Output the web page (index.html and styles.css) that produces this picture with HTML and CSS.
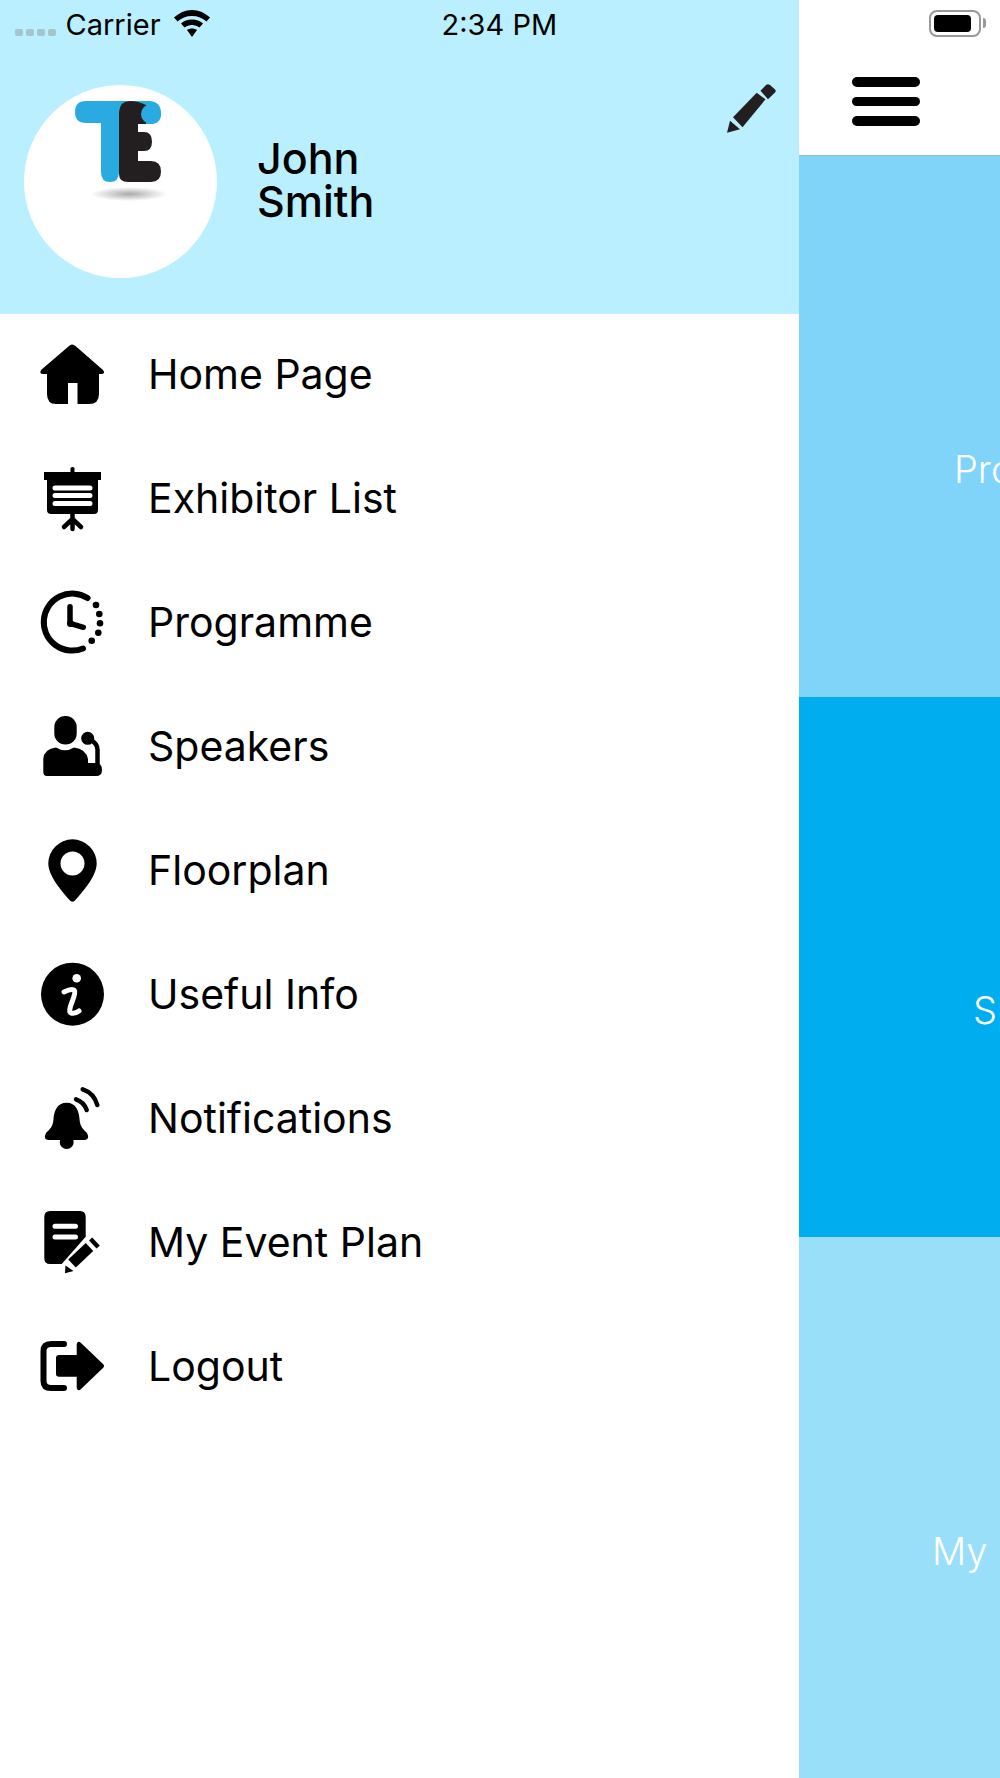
FILE: index.html
```html
<!DOCTYPE html>
<html lang="en">
<head>
    <meta charset="UTF-8">
    <meta name="viewport" content="width=device-width, initial-scale=1.0">
    <title>Event menu</title>
    <link rel="stylesheet" href="styles.css">
</head>
<body>
    <div class="app">
        <aside class="drawer">
            <header class="drawer-head">
                <div class="status">
                    <div class="signal"><span></span><span></span><span></span><span></span></div>
                    <span class="carrier">Carrier</span>
                    <svg class="wifi" viewBox="0 0 36 27"><path d="M18 0C25 0 31 3 36 7.500L32.500 11.500C28.500 8 24 6 18 6C12 6 7.500 8 3.500 11.500L0 7.500C5 3 11 0 18 0Z"/><path d="M18 9.500C22.500 9.500 26 11 29 13.500L25.500 17.500C23.500 16 21 15 18 15C15 15 12.500 16 10.500 17.500L7 13.500C10 11 13.500 9.500 18 9.500Z"/><path d="M18 18.500C20 18.500 21.500 19 23 20L18 27L13 20C14.500 19 16 18.500 18 18.500Z"/></svg>
                    <span class="time">2:34 PM</span>
                </div>
                <div class="profile">
                    <div class="avatar">
                        <svg class="logo" viewBox="0 0 100 110">
                            <defs>
                                <radialGradient id="logo-shadow">
                                    <stop offset="0" stop-color="#aaa"/>
                                    <stop offset="1" stop-color="#fff"/>
                                </radialGradient>
                            </defs>
                            <ellipse cx="55" cy="94" rx="38" ry="7" fill="url(#logo-shadow)"/>
                            <path fill="#29abe2" d="M12 1H76Q87 2 87 13Q87 24 77 24H45V72Q45 82 36 82Q27 82 27 72V23H12Q1 23 1 12Q1 1 12 1Z"/>
                            <path fill="#231f20" d="M45 12Q46 1 56 1Q64 1 72 5V24H64V32H70Q78 32 78 41.500Q78 51 70 51H64V61H77Q87 61 87 71.500Q87 82 77 82H54Q45 82 45 74Z"/>
                            <circle fill="#29abe2" cx="77" cy="14" r="10"/>
                        </svg>
                    </div>
                    <div class="name">John<br>Smith</div>
                    <svg class="edit" viewBox="0 0 50 50"><path d="M0 48.700L3 36.700L13 45.300Z"/><path d="M6 33.300L29.700 8.700L38.500 15.300L15.500 43.300Z"/><path d="M33.500 6.700L39 1Q41 -0.500 43 1L47.500 5Q50 7 47.500 9L41 15.300Z"/></svg>
                </div>
            </header>
            <nav class="menu">
                <a class="menu-item">
                    <svg class="menu-icon" viewBox="0 0 66 66"><path d="M29 5Q32 2 35.500 5L63 29Q66 33 61 33H59V53Q59 63 49 63H37.500V42H28V63H16Q7 63 7 53V33H3Q-1 33 1 29Z"/></svg>
                    <span>Home Page</span>
                </a>
                <a class="menu-item">
                    <svg class="menu-icon" viewBox="0 0 66 66">
                        <path d="M30.500 3Q32.500 1 34.500 3V7H61V15H58V45Q58 49 54 49H11Q7 49 7 45V15H4V7H30.500Z"/>
                        <path class="cut" d="M15 23H50M15 30.500H50M15 38.500H50"/>
                        <path class="line" d="M32.500 49V64M32.500 54L24 62M32.500 54L41 62"/>
                    </svg>
                    <span>Exhibitor List</span>
                </a>
                <a class="menu-item">
                    <svg class="menu-icon" viewBox="0 0 66 66">
                        <path class="line wide" d="M47.500 9A28.500 28.500 0 1 0 43 59.500"/>
                        <path class="line hand" d="M30 17.700V34.300L43.300 38.300"/>
                        <circle cx="30.500" cy="34.500" r="3.500"/>
                        <circle cx="56" cy="16" r="3.300"/>
                        <circle cx="59.300" cy="25" r="3.300"/>
                        <circle cx="60" cy="34.300" r="3.300"/>
                        <circle cx="58.300" cy="43.700" r="3.300"/>
                        <circle cx="51.700" cy="51.700" r="3.300"/>
                    </svg>
                    <span>Programme</span>
                </a>
                <a class="menu-item">
                    <svg class="menu-icon" viewBox="0 0 66 66">
                        <rect x="14.300" y="3" width="22.400" height="28.500" rx="11"/>
                        <path d="M3.300 59V46Q4 36 16 34.500Q25 40 34 34.500Q46 36 48 46V50H56Q62 50 62 57Q62 63 56 63H7Q3.300 63 3.300 59Z"/>
                        <circle cx="47.700" cy="25.300" r="6.500"/>
                        <path class="line" d="M51 27Q58 31 57.500 38V52"/>
                    </svg>
                    <span>Speakers</span>
                </a>
                <a class="menu-item">
                    <svg class="menu-icon" viewBox="0 0 66 66">
                        <path d="M32.500 2.300A24.200 24.200 0 0 1 56.700 26.500C56.700 40 40 58 34.500 64Q32.500 65.500 30.500 64C25 58 8.300 40 8.300 26.500A24.200 24.200 0 0 1 32.500 2.300Z"/>
                        <circle class="hole" cx="32.500" cy="26.500" r="12"/>
                    </svg>
                    <span>Floorplan</span>
                </a>
                <a class="menu-item">
                    <svg class="menu-icon" viewBox="0 0 66 66">
                        <circle cx="32.500" cy="33.200" r="31.500"/>
                        <circle class="hole" cx="36.700" cy="17.300" r="4.300"/>
                        <path class="cut" d="M24 31Q32 27 34.500 29.500Q36 31 32 41Q28 51 31 52Q35 53 39 50"/>
                    </svg>
                    <span>Useful Info</span>
                </a>
                <a class="menu-item">
                    <svg class="menu-icon" viewBox="0 0 66 66">
                        <path d="M26.700 17.700C36 17.700 39 26 39.500 34C40 42 44 45 47 48Q50 54 45 55H8Q3 54 6 48C9 45 13 42 13.500 34C14 26 17 17.700 26.700 17.700Z"/>
                        <circle cx="26.700" cy="57" r="7"/>
                        <path class="line" d="M36 14.300Q44 17 46.700 25M42.700 4.300Q54 8 57.300 20"/>
                    </svg>
                    <span>Notifications</span>
                </a>
                <a class="menu-item">
                    <svg class="menu-icon" viewBox="0 0 66 66">
                        <path d="M10 2H40Q45.700 2 45.700 8V27.700L21.700 55H10Q4.300 55 4.300 49V8Q4.300 2 10 2Z"/>
                        <path class="cut" d="M15 17.300H35.500M15 28H35.500"/>
                        <path d="M25 64.300L25.500 56.500L33.500 62Z"/>
                        <path class="pen" d="M32 54.500L49.500 38"/>
                        <path class="pen" d="M52.800 35.500L56 32.500"/>
                    </svg>
                    <span>My Event Plan</span>
                </a>
                <a class="menu-item">
                    <svg class="menu-icon" viewBox="0 0 66 66">
                        <path class="line wide" d="M24 11H11Q3.500 11 3.500 18V48Q3.500 55 11 55H24"/>
                        <path d="M19 22H36.700V11Q38 7 41 10L63 31Q65 33 63 35L41 56Q38 59 36.700 55V43.700H19Q16 43.700 16 41V25Q16 22 19 22Z"/>
                    </svg>
                    <span>Logout</span>
                </a>
            </nav>
        </aside>
        <main class="main">
            <div class="topbar">
                <div class="battery"><div class="battery-level"></div></div>
                <div class="burger"><span></span><span></span><span></span></div>
            </div>
            <div class="panel panel-programme">Programme</div>
            <div class="panel panel-speakers">Speakers</div>
            <div class="panel panel-plan">My Event Plan</div>
        </main>
    </div>
</body>
</html>
```

FILE: styles.css
```css
body {
    margin: 0;
    background: #fff;
    font-family: Inter, "Liberation Sans", sans-serif;
    color: #000;
}
.app {
    display: flex;
    width: 1000px;
    height: 1778px;
    overflow: hidden;
}
.drawer {
    width: 799px;
    flex: none;
}
.drawer-head {
    height: 314px;
    background: #baefff;
}
.status {
    display: flex;
    align-items: flex-start;
    height: 44px;
    padding-left: 15px;
}
.signal {
    display: flex;
    gap: 3.500px;
    margin-top: 29px;
}
.signal span {
    width: 7.500px;
    height: 7px;
    border-radius: 2px;
    background: #a4c4ce;
}
.carrier {
    margin-left: 10px;
    margin-top: 8px;
    font-size: 29px;
    line-height: 33px;
}
.wifi {
    width: 36px;
    height: 27px;
    margin-left: 13px;
    margin-top: 10px;
}
.time {
    margin-left: 232px;
    margin-top: 8px;
    font-size: 29px;
    line-height: 33px;
}
.profile {
    display: flex;
    align-items: center;
    margin-top: 41px;
    padding: 0 22px 0 24px;
}
.avatar {
    width: 193px;
    height: 193px;
    flex: none;
    border-radius: 50%;
    background: #fff;
}
.logo {
    display: block;
    width: 100px;
    height: 110px;
    margin: 15px 0 0 50px;
}
.name {
    margin: -4px 0 0 40px;
    font-size: 43px;
    font-weight: 500;
    line-height: 43px;
}
.edit {
    width: 50px;
    height: 50px;
    margin-left: auto;
    margin-top: -1px;
    align-self: flex-start;
    fill: #231f20;
}
.menu-item {
    display: flex;
    align-items: center;
    height: 120px;
    padding: 0 0 4px 40px;
    font-size: 41px;
}
.menu-icon {
    width: 66px;
    height: 66px;
    flex: none;
    margin-right: 42px;
    overflow: visible;
}
.line {
    fill: none;
    stroke: #000;
    stroke-width: 4.500px;
    stroke-linecap: round;
    stroke-linejoin: round;
}
.line.wide {
    stroke-width: 6px;
}
.line.hand {
    stroke-width: 5.500px;
}
.cut {
    fill: none;
    stroke: #fff;
    stroke-width: 5px;
    stroke-linecap: round;
}
.hole {
    fill: #fff;
}
.pen {
    fill: none;
    stroke: #000;
    stroke-width: 11px;
}
.main {
    flex: 1;
    display: flex;
    flex-direction: column;
}
.topbar {
    height: 155px;
    flex: none;
    border-bottom: 1px solid #9fb9c4;
    background: #fff;
}
.battery {
    position: relative;
    box-sizing: border-box;
    width: 52px;
    height: 27px;
    margin: 10px 0 0 130px;
    padding: 3px;
    border: 2px solid #999;
    border-radius: 8px;
}
.battery::after {
    content: "";
    position: absolute;
    right: -7px;
    top: 6px;
    width: 3px;
    height: 10px;
    border-radius: 0 4px 4px 0;
    background: #999;
}
.battery-level {
    width: 37px;
    height: 17px;
    border-radius: 4px;
    background: #000;
}
.burger {
    display: flex;
    flex-direction: column;
    gap: 10px;
    width: 68px;
    margin: 40px 0 0 53px;
}
.burger span {
    height: 9.500px;
    border-radius: 5px;
    background: #000;
}
.panel {
    flex: 1;
    display: flex;
    align-items: center;
    padding-top: 86px;
    box-sizing: border-box;
    color: #fff;
    font-family: Inter, sans-serif;
    font-size: 38px;
    font-weight: 300;
    white-space: nowrap;
}
.panel-programme {
    background: #80d4fa;
    padding-left: 155px;
}
.panel-speakers {
    background: #00aeef;
    padding-left: 174px;
}
.panel-plan {
    background: #99dffa;
    padding-left: 133px;
}
```
